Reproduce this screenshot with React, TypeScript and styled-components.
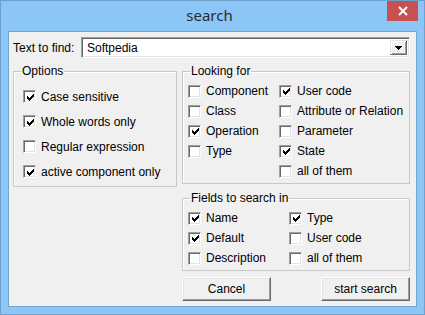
import styled, { createGlobalStyle } from "styled-components";

const GlobalStyle = createGlobalStyle`
  html, body {
    margin: 0;
    padding: 0;
    background: #ffffff;
  }
  * {
    box-sizing: border-box;
  }
`;

type Option = { label: string; checked?: boolean };

const options: Option[] = [
  { label: "Case sensitive", checked: true },
  { label: "Whole words only", checked: true },
  { label: "Regular expression" },
  { label: "active component only", checked: true },
];

const lookingFor: Option[] = [
  { label: "Component" },
  { label: "User code", checked: true },
  { label: "Class" },
  { label: "Attribute or Relation" },
  { label: "Operation", checked: true },
  { label: "Parameter" },
  { label: "Type" },
  { label: "State", checked: true },
  { label: "" },
  { label: "all of them" },
];

const fields: Option[] = [
  { label: "Name", checked: true },
  { label: "Type", checked: true },
  { label: "Default", checked: true },
  { label: "User code" },
  { label: "Description" },
  { label: "all of them" },
];

const CheckBox = ({ label, checked }: Option) => {
  if (!label) return <span />;
  return (
    <CheckRow>
      <Box>
        {checked && (
          <svg width="7" height="7" viewBox="0 0 7 7" shapeRendering="crispEdges">
            <polygon points="0,2 2,4 7,-1 7,2 2,7 0,5" fill="#000" />
          </svg>
        )}
      </Box>
      <span>{label}</span>
    </CheckRow>
  );
};

const App = (): JSX.Element => {
  return (
    <>
      <GlobalStyle />
      <Window>
        <TitleBar>
          <span />
          <Title>search</Title>
          <CloseButton>
            <svg width="10" height="10" viewBox="0 0 10 10">
              <path d="M1 1 L9 9 M9 1 L1 9" stroke="#fff" strokeWidth="2" />
            </svg>
          </CloseButton>
        </TitleBar>
        <Client>
          <FindRow>
            <FindLabel>Text to find:</FindLabel>
            <Combo>
              <ComboText>Softpedia</ComboText>
              <DropButton>
                <svg width="7" height="4" viewBox="0 0 7 4" shapeRendering="crispEdges">
                  <polygon points="0,0 7,0 3.5,4" fill="#000" />
                </svg>
              </DropButton>
            </Combo>
          </FindRow>
          <Main>
            <Group>
              <Legend>Options</Legend>
              <Grid $cols="1fr" $rowHeight={25} $pad="6px 0 2px 9px">
                {options.map((o) => (
                  <CheckBox key={o.label} {...o} />
                ))}
              </Grid>
            </Group>
            <RightColumn>
              <Group>
                <Legend>Looking for</Legend>
                <Grid $cols="91px 1fr" $rowHeight={20} $pad="3px 0 2px 5px">
                  {lookingFor.map((o, i) => (
                    <CheckBox key={i} {...o} />
                  ))}
                </Grid>
              </Group>
              <Group $marginTop={7}>
                <Legend>Fields to search in</Legend>
                <Grid $cols="101px 1fr" $rowHeight={20} $pad="3px 0 2px 5px">
                  {fields.map((o, i) => (
                    <CheckBox key={i} {...o} />
                  ))}
                </Grid>
              </Group>
              <ButtonRow>
                <Button>Cancel</Button>
                <Button>start search</Button>
              </ButtonRow>
            </RightColumn>
          </Main>
        </Client>
      </Window>
    </>
  );
};
export default App;

const Window = styled.div`
  width: 425px;
  height: 315px;
  display: flex;
  flex-direction: column;
  background: #8cc6f7;
  border: 1px solid #6f9fcd;
  font-family: "Liberation Sans", Arial, sans-serif;
  font-size: 12px;
  color: #000;
`;

const TitleBar = styled.div`
  height: 30px;
  display: grid;
  grid-template-columns: 1fr auto 1fr;
  align-items: start;
  padding-right: 6px;
`;

const Title = styled.div`
  font-family: "Noto Sans", "Open Sans", sans-serif;
  font-size: 15px;
  line-height: 29px;
  color: #2b2b2b;
`;

const CloseButton = styled.div`
  justify-self: end;
  width: 31px;
  height: 20px;
  background: #c75050;
  display: flex;
  align-items: center;
  justify-content: center;
`;

const Client = styled.div`
  flex: 1;
  margin: 0 7px 7px 7px;
  background: #f0f0f0;
  border: 1px solid #76a3cf;
  padding: 5px 6px 0 4px;
`;

const FindRow = styled.div`
  display: flex;
  align-items: center;
  height: 21px;
`;

const FindLabel = styled.div`
  width: 68px;
`;

const Combo = styled.div`
  flex: 1;
  height: 21px;
  display: flex;
  align-items: center;
  background: #fff;
  border-style: solid;
  border-width: 1px;
  border-color: #a0a0a0 #fff #fff #a0a0a0;
  box-shadow: inset 1px 1px 0 #696969, inset -1px -1px 0 #e3e3e3;
  padding: 2px;
`;

const ComboText = styled.div`
  flex: 1;
  padding-left: 3px;
`;

const DropButton = styled.div`
  width: 17px;
  height: 15px;
  display: flex;
  align-items: center;
  justify-content: center;
  background: #f0f0f0;
  border-style: solid;
  border-width: 1px;
  border-color: #e3e3e3 #696969 #696969 #e3e3e3;
  box-shadow: inset 1px 1px 0 #fff, inset -1px -1px 0 #a0a0a0;
`;

const Main = styled.div`
  display: grid;
  grid-template-columns: 164px 1fr;
  column-gap: 5px;
  align-items: start;
  margin-top: 6px;
`;

const RightColumn = styled.div`
  display: flex;
  flex-direction: column;
`;

const Group = styled.fieldset<{ $marginTop?: number }>`
  margin: ${(p) => p.$marginTop ?? 0}px 0 0 0;
  min-width: 0;
  border: 1px solid #c8c8c8;
  box-shadow: inset 1px 1px 0 #fff;
  padding: 0;
`;

const Legend = styled.legend`
  margin-left: 7px;
  padding: 0 1px;
  line-height: 14px;
  font-size: 12px;
`;

const Grid = styled.div<{ $cols: string; $rowHeight: number; $pad: string }>`
  display: grid;
  grid-template-columns: ${(p) => p.$cols};
  grid-auto-rows: ${(p) => p.$rowHeight}px;
  align-items: center;
  padding: ${(p) => p.$pad};
`;

const CheckRow = styled.label`
  display: flex;
  align-items: center;
  gap: 5px;
  white-space: nowrap;
`;

const Box = styled.span`
  width: 13px;
  height: 13px;
  flex: none;
  display: flex;
  align-items: center;
  justify-content: center;
  background: #fff;
  border-style: solid;
  border-width: 1px;
  border-color: #a0a0a0 #fff #fff #a0a0a0;
  box-shadow: inset 1px 1px 0 #696969, inset -1px -1px 0 #e3e3e3;
  padding-top: 1px;
  padding-left: 1px;
`;

const ButtonRow = styled.div`
  display: flex;
  justify-content: space-between;
  margin-top: 6px;
`;

const Button = styled.div`
  width: 89px;
  height: 24px;
  display: flex;
  align-items: center;
  justify-content: center;
  background: #f0f0f0;
  border-style: solid;
  border-width: 1px;
  border-color: #fff #696969 #696969 #fff;
  box-shadow: inset -1px -1px 0 #a0a0a0, inset 1px 1px 0 #e3e3e3;
`;
